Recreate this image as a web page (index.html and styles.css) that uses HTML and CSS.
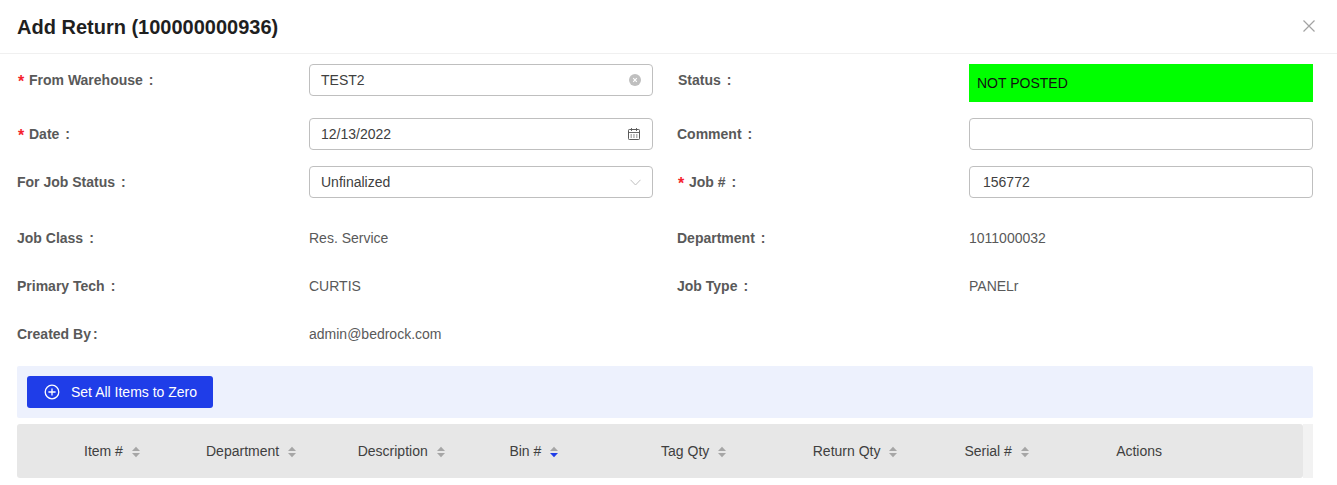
FILE: index.html
```html
<!DOCTYPE html>
<html lang="en">
<head>
<meta charset="utf-8">
<title>Add Return</title>
<link rel="stylesheet" href="styles.css">
</head>
<body>
<div class="modal">
  <header class="modal-head">
    <h1>Add Return (100000000936)</h1>
    <svg class="close" viewBox="0 0 14 14" width="14" height="14"><path d="M1.5 1.5l11 11M12.5 1.5l-11 11"/></svg>
  </header>
  <div class="modal-body">
    <form class="form">
      <div class="field row-status">
        <label class="label"><i class="req">*</i>From Warehouse<b class="colon">:</b></label>
        <div class="control">
          <div class="input"><span>TEST2</span>
            <svg class="ic" viewBox="0 0 12 12" width="12" height="12"><circle cx="6" cy="6" r="6" fill="#bfbfbf"/><path d="M4.2 4.2l3.6 3.6M7.8 4.2l-3.6 3.6" stroke="#fff" stroke-width="1.1"/></svg>
          </div>
        </div>
      </div>
      <div class="field row-status">
        <label class="label label-status">Status<b class="colon">:</b></label>
        <div class="control"><div class="status">NOT POSTED</div></div>
      </div>

      <div class="field">
        <label class="label"><i class="req">*</i>Date<b class="colon">:</b></label>
        <div class="control">
          <div class="input"><span>12/13/2022</span>
            <svg class="ic cal" viewBox="0 0 12 12" width="12" height="12" fill="none" stroke="#595959" stroke-width="1"><rect x=".5" y="1.5" width="11" height="10" rx=".8"/><path d="M.5 4.5h11M3.5 0v3M8.5 0v3M2.5 7h1.5M5.2 7h1.5M8 7h1.5M2.5 9h1.5M5.2 9h1.5M8 9h1.5" stroke-width=".9"/></svg>
          </div>
        </div>
      </div>
      <div class="field">
        <label class="label">Comment<b class="colon">:</b></label>
        <div class="control"><div class="input"></div></div>
      </div>

      <div class="field">
        <label class="label">For Job Status<b class="colon">:</b></label>
        <div class="control">
          <div class="input"><span>Unfinalized</span>
            <svg class="ic" viewBox="0 0 12 12" width="12" height="12" fill="none" stroke="#bfbfbf" stroke-width="1"><path d="M1.5 3.8l5 5.2 5-5.2"/></svg>
          </div>
        </div>
      </div>
      <div class="field">
        <label class="label"><i class="req">*</i>Job #<b class="colon">:</b></label>
        <div class="control"><div class="input input-number"><span>156772</span></div></div>
      </div>

      <div class="field info">
        <label class="label">Job Class<b class="colon">:</b></label>
        <div class="value">Res. Service</div>
      </div>
      <div class="field info">
        <label class="label">Department<b class="colon">:</b></label>
        <div class="value">1011000032</div>
      </div>

      <div class="field info">
        <label class="label">Primary Tech<b class="colon">:</b></label>
        <div class="value">CURTIS</div>
      </div>
      <div class="field info">
        <label class="label">Job Type<b class="colon">:</b></label>
        <div class="value">PANELr</div>
      </div>

      <div class="field info">
        <label class="label">Created By<b class="colon tight">:</b></label>
        <div class="value">admin@bedrock.com</div>
      </div>
    </form>

    <div class="toolbar">
      <button type="button" class="btn">
        <svg viewBox="0 0 16 16" width="16" height="16" fill="none" stroke="#fff" stroke-width="1.3"><circle cx="8" cy="8" r="6.8"/><path d="M8 4.4v7.2M4.4 8h7.2"/></svg>
        <span>Set All Items to Zero</span>
      </button>
    </div>

    <div class="table-wrap">
      <div class="thead">
        <div class="th sel"></div>
        <div class="th">Item #<svg class="sort" viewBox="0 0 8 12" width="8" height="12"><path d="M4 .8L8 5H0z" fill="#a6a6a6"/><path d="M0 7h8l-4 4.2z" fill="#a6a6a6"/></svg></div>
        <div class="th">Department<svg class="sort" viewBox="0 0 8 12" width="8" height="12"><path d="M4 .8L8 5H0z" fill="#a6a6a6"/><path d="M0 7h8l-4 4.2z" fill="#a6a6a6"/></svg></div>
        <div class="th">Description<svg class="sort" viewBox="0 0 8 12" width="8" height="12"><path d="M4 .8L8 5H0z" fill="#a6a6a6"/><path d="M0 7h8l-4 4.2z" fill="#a6a6a6"/></svg></div>
        <div class="th">Bin #<svg class="sort" viewBox="0 0 8 12" width="8" height="12"><path d="M4 .8L8 5H0z" fill="#a6a6a6"/><path d="M0 7h8l-4 4.2z" fill="#1f3de8"/></svg></div>
        <div class="th">Tag Qty<svg class="sort" viewBox="0 0 8 12" width="8" height="12"><path d="M4 .8L8 5H0z" fill="#a6a6a6"/><path d="M0 7h8l-4 4.2z" fill="#a6a6a6"/></svg></div>
        <div class="th">Return Qty<svg class="sort" viewBox="0 0 8 12" width="8" height="12"><path d="M4 .8L8 5H0z" fill="#a6a6a6"/><path d="M0 7h8l-4 4.2z" fill="#a6a6a6"/></svg></div>
        <div class="th">Serial #<svg class="sort" viewBox="0 0 8 12" width="8" height="12"><path d="M4 .8L8 5H0z" fill="#a6a6a6"/><path d="M0 7h8l-4 4.2z" fill="#a6a6a6"/></svg></div>
        <div class="th">Actions</div>
      </div>
      <div class="scroll-gutter"></div>
    </div>
  </div>
</div>
</body>
</html>
```
FILE: styles.css
```css
* { box-sizing: border-box; }
html, body { margin: 0; padding: 0; height: 100%; overflow: hidden; background: #fff; }
body { font-family: "Liberation Sans", Arial, sans-serif; font-size: 14px; color: #262626; }

.modal { width: 1337px; }
.modal-head {
  height: 54px;
  border-bottom: 1px solid #f0f0f0;
  padding: 0 21px 0 17px;
  display: flex;
  align-items: center;
  justify-content: space-between;
}
.modal-head h1 { margin: 0; font-size: 20px; line-height: 54px; font-weight: 700; color: #1f1f1f; }
.close { fill: none; stroke: #a3a3a3; stroke-width: 1.2; margin-bottom: 2px; }

.modal-body { padding: 10px 24px 0 17px; }

.form { display: grid; grid-template-columns: 636px 636px; column-gap: 24px; }
.field { display: grid; grid-template-columns: 292px 344px; height: 48px; padding-bottom: 16px; }
.field.row-status { height: 54px; }
.field.info { height: 48px; padding-bottom: 0; align-items: center; }

.label { display: flex; align-items: center; height: 32px; font-weight: 700; color: #595959; font-size: 14px; }
.info .label { height: 48px; }
.req { color: #f5222d; font-style: normal; font-weight: 700; font-family: "Liberation Sans", sans-serif; margin: 4px 4px 0 1px; width: 7px; font-size: 16px; }
.colon { margin-left: 6px; margin-right: 8px; font-weight: 700; }
.colon.tight { margin-left: 2px; }
.label-status { padding-left: 1px; }

.input {
  height: 32px;
  border: 1px solid #bfbfbf;
  border-radius: 4px;
  padding: 0 11px;
  display: flex;
  align-items: center;
  justify-content: space-between;
  color: #404040;
  background: #fff;
}
.input-number { padding-left: 13px; }
.ic { flex: none; }
.cal { margin-right: 1px; }

.status { height: 38px; background: #00ff00; color: #111; padding: 11px 8px 0; line-height: 16px; }
.value { color: #595959; line-height: 48px; }

.toolbar { margin-top: 8px; height: 52px; background: #edf1fd; padding: 10px; border-radius: 2px; }
.btn {
  height: 32px;
  width: 186px;
  padding: 0 0 0 17px;
  border: 0;
  border-radius: 3px;
  background: #1f3de8;
  color: #fff;
  font: 14px "Liberation Sans", Arial, sans-serif;
  display: flex;
  align-items: center;
  gap: 11px;
}

.table-wrap { margin-top: 6px; height: 54px; display: flex; width: 1296px; }
.thead {
  width: 1286px;
  background: #e7e7e7;
  border-radius: 3px;
  display: grid;
  grid-template-columns: 51px 122px repeat(6, 151.7px) 1fr;
  align-items: center;
}
.th { padding-left: 16px; color: #404040; display: flex; align-items: center; white-space: nowrap; }
.sort { margin-left: 9px; margin-top: 1px; }
.scroll-gutter { width: 10px; background: #f2f2f2; }
```
